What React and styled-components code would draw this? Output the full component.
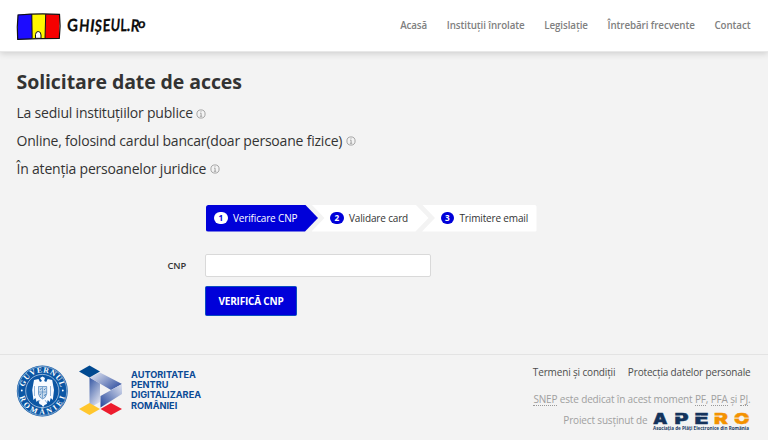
import React from 'react';
import styled, { createGlobalStyle, css } from 'styled-components';

const GlobalStyle = createGlobalStyle`
  * { box-sizing: border-box; }
  body {
    margin: 0;
    background: #f3f3f3;
    color: #333;
    font-family: "Open Sans", sans-serif;
    font-size: 10px;
    letter-spacing: -0.155px;
    line-height: 14px;
  }
`;

const Page = styled.div`
  display: flex;
  flex-direction: column;
  height: 440px;
  overflow: hidden;
`;

const Header = styled.header`
  display: flex;
  flex: none;
  align-items: center;
  justify-content: space-between;
  height: 52px;
  padding: 0 17.5px 0 16px;
  background: #fff;
  border-bottom: 1px solid #e8e8e8;
  box-shadow: 0 1px 7px rgba(0, 0, 0, 0.18);
`;

const Brand = styled.a`
  display: flex;
`;

const Nav = styled.nav`
  display: flex;
  gap: 19.7px;
`;

const NavLink = styled.a`
  color: #808080;
  font-size: 9.8px;
  font-weight: 600;
  letter-spacing: -0.1px;
  white-space: nowrap;
`;

const Main = styled.main`
  flex: none;
  height: 302px;
  padding: 16px 16.5px 0;
`;

const Title = styled.h1`
  margin: 0 0 7px;
  font-size: 19.5px;
  font-weight: 700;
  letter-spacing: -0.09px;
  line-height: 28px;
`;

const Topic = styled.h2`
  display: flex;
  align-items: center;
  gap: 3.5px;
  height: 20px;
  margin: 0 0 7.75px;
  font-size: 14px;
  font-weight: 400;
  letter-spacing: -0.205px;
  line-height: 20px;
  white-space: nowrap;
`;

const InfoSvg = styled.svg`
  margin-top: 1px;
`;

const Steps = styled.ol`
  display: flex;
  width: 330.5px;
  height: 27px;
  margin: 26px 0 0 189.5px;
  padding: 0;
  border-radius: 2.5px;
  overflow: hidden;
  list-style: none;
`;

const arrowShapes = {
  first: 'polygon(0 0, calc(100% - 13px) 0, 100% 50%, calc(100% - 13px) 100%, 0 100%)',
  middle: 'polygon(0 0, calc(100% - 13px) 0, 100% 50%, calc(100% - 13px) 100%, 0 100%, 13px 50%)',
  last: 'polygon(0 0, 100% 0, 100% 100%, 0 100%, 13px 50%)',
};

const Step = styled.li`
  display: flex;
  flex: none;
  align-items: center;
  gap: 5.5px;
  width: ${(p) => p.$width}px;
  padding-left: 18.5px;
  margin-left: -6.5px;
  background: #fff;
  clip-path: ${(p) => arrowShapes[p.$shape]};
  white-space: nowrap;
  ${(p) => p.$active && css`
    margin-left: 0;
    padding-left: 8px;
    background: #0000d9;
    color: #fff;
  `}
`;

const StepNumber = styled.span`
  width: 13.5px;
  height: 12px;
  border-radius: 6px;
  background: ${(p) => (p.$active ? '#fff' : '#0000d9')};
  color: ${(p) => (p.$active ? '#0000d9' : '#fff')};
  font-size: 8.2px;
  font-weight: 700;
  letter-spacing: 0;
  line-height: 12px;
  text-align: center;
`;

const Form = styled.form`
  display: grid;
  grid-template-columns: 169.5px 226px;
  column-gap: 19px;
  row-gap: 9px;
  align-items: center;
  margin-top: 22.5px;
`;

const Label = styled.label`
  font-size: 9.3px;
  font-weight: 600;
  text-align: right;
`;

const Input = styled.input`
  width: 226px;
  height: 23px;
  padding: 0 6px;
  border: 1px solid #d9d9d9;
  border-radius: 2px;
  background: #fff;
`;

const Submit = styled.button`
  grid-column: 2;
  justify-self: start;
  width: 92px;
  height: 30px;
  padding: 0;
  border: 1px solid #0a4fc0;
  border-radius: 1.5px;
  background: #0000d9;
  color: #fff;
  font-family: inherit;
  font-size: 10px;
  font-weight: 700;
  letter-spacing: -0.2px;
`;

const Footer = styled.footer`
  display: flex;
  flex: 1;
  justify-content: space-between;
  padding: 10px 17.5px 0 16px;
  border-top: 1px solid #e3e3e3;
`;

const Partners = styled.div`
  display: flex;
  align-items: flex-start;
  gap: 10px;
`;

const Authority = styled.p`
  margin: 5px 0 0 -1px;
  color: #0a4a96;
  font-family: Inter, sans-serif;
  font-size: 9.2px;
  font-weight: 700;
  letter-spacing: 0;
  line-height: 10.2px;
`;

const FooterInfo = styled.div`
  display: flex;
  flex-direction: column;
  align-items: flex-end;
  color: #a0a0a0;
`;

const LegalLinks = styled.div`
  display: flex;
  gap: 12.5px;
  color: #4d4d4d;
`;

const Dedication = styled.p`
  margin: 13px 0 0;
`;

const Abbr = styled.abbr`
  display: inline-block;
  height: 14px;
  border-bottom: 1px dotted #999;
  text-decoration: none;
`;

const Support = styled.div`
  display: flex;
  align-items: flex-start;
  gap: 5px;
  margin-top: 5px;
  line-height: 19px;
`;

const LogoSvg = styled.svg`
  display: block;
  overflow: visible;
  letter-spacing: 0;
`;

const InfoIcon = () => (
  <InfoSvg width="10" height="10" viewBox="0 0 10 10" fill="none" stroke="#8b8b8b" strokeWidth="0.75">
    <circle cx="5" cy="5" r="4.1" />
    <path d="M4.100 4.200h1v3M3.900 7.300h2.300M5 2.300v.9" />
  </InfoSvg>
);

// Character, x, baseline, tilt, font size, horizontal stretch
const WORDMARK = [
  ['G', 0, 19.600, -3, 17, 0.88],
  ['H', 11.800, 19.500, 1, 17, 0.78],
  ['I', 22.500, 19.600, 3, 17, 0.9],
  ['Ș', 27.300, 19.400, 2, 16.500, 0.78],
  ['E', 35.500, 19.400, -2, 17, 0.78],
  ['U', 43.200, 19, 1, 17, 0.74],
  ['L', 53.200, 19.200, -2, 17, 0.72],
  ['.', 59.600, 19.200, 0, 17, 0.9],
  ['R', 63.300, 19.600, 2, 17, 0.8],
  ['o', 70.800, 16.200, 0, 13, 1],
];

const GhiseulLogo = () => (
  <LogoSvg width="132" height="30" viewBox="0 0 132 30">
    <path d="M2 3.500L16 3v25L1.500 28.500z" fill="#1c0cff" />
    <path d="M16 3h13.500l-.3 24.500L16 28z" fill="#fff700" />
    <path d="M29.500 3L44 3.500 43 27.500H29z" fill="#f50000" />
    <path d="M2 4Q22 2 43.500 3.300Q44.800 15 43.300 27.300Q22 27.300 1.700 28.300Q.8 15 2 4z" fill="none" stroke="#111" strokeWidth="1.2" />
    <path d="M15.800 3.200L16.200 27.500M29.700 3.200L29 27.500" stroke="#111" strokeWidth="1" />
    <path d="M19.500 27.300V23.500Q20 20.300 22.200 20.500Q25 20.500 25 24V27.300z" fill="#fff" stroke="#111" />
    <g transform="translate(51 1)" fill="#0b0b0b" stroke="#0b0b0b" strokeWidth=".25" fontFamily="Lato, sans-serif" fontWeight="700">
      {WORDMARK.map(([ch, x, y, angle, size, stretch]) => (
        <text key={ch} fontSize={size} transform={`translate(${x} ${y}) rotate(${angle}) skewX(-4) scale(${stretch} 1)`}>{ch}</text>
      ))}
    </g>
  </LogoSvg>
);

const GovernmentSeal = () => (
  <LogoSvg width="53" height="52" viewBox="0 0 53 52">
    <defs>
      <path id="sealTop" d="M7.800 26a18.500 18.500 0 0 1 37 0" />
      <path id="sealBottom" d="M2.900 26a23.400 23.400 0 0 0 46.800 0" />
    </defs>
    <circle cx="26.300" cy="26" r="25.500" fill="#0b56a4" />
    <circle cx="26.300" cy="26" r="24.500" fill="none" stroke="#e6eff8" strokeWidth=".5" />
    <circle cx="26.300" cy="26" r="16.600" fill="none" stroke="#e6eff8" strokeWidth=".6" />
    <g fill="#fff" fontFamily="Liberation Serif, serif" fontSize="7.800" fontWeight="700">
      <text><textPath href="#sealTop" startOffset="4" textLength="50">GUVERNUL</textPath></text>
      <text><textPath href="#sealBottom" startOffset="6" textLength="61">ROMÂNIEI</textPath></text>
    </g>
    <circle cx="5.800" cy="25.500" r=".9" fill="#fff" />
    <circle cx="46.800" cy="25.500" r=".9" fill="#fff" />
    <path d="M24 13l2.500-1.500 2.500 1.500-.8 3 2 1 1.500-3 4.500 1 1.800 10-1.200 10-2-2-1.200 4-1.800-2-1 4-2.200 1-1.500 2-1.500-2-2.200-1-1-4-1.800 2-1.200-4-2 2-1.200-10 1.800-10 4.500-1 1.500 3 2-1z" fill="#f7faff" />
    <path d="M22.500 21.500h8.200v7.500q-1 4-4 5-3.200-1-4.200-5z" fill="#c7d9eb" stroke="#0b56a4" strokeWidth=".5" />
    <path d="M26.500 22v11.500M22.500 27h8M18.500 21v10M34.500 21v10M24 35l-2 3M29 35l2 3" stroke="#3474b6" strokeWidth=".5" fill="none" />
    <path d="M24 24.500l1.500-1M28 25l1.500-1.500M24 30l1-1.500M28.500 31l1-2" stroke="#0b56a4" strokeWidth=".7" />
  </LogoSvg>
);

const AuthorityLogo = () => (
  <LogoSvg width="43" height="51" viewBox="0 0 43 51">
    <defs>
      <linearGradient id="stem" x1="0" y1="0" x2=".5" y2="1">
        <stop offset="0" stopColor="#3456a3" /><stop offset="1" stopColor="#d5daeb" />
      </linearGradient>
      <linearGradient id="roof" x1="0" y1="0" x2="1" y2=".7">
        <stop offset="0" stopColor="#eceef6" /><stop offset="1" stopColor="#3b58a5" />
      </linearGradient>
      <linearGradient id="fold" x1="1" y1="0" x2="0" y2="1">
        <stop offset="0" stopColor="#dfe3f1" /><stop offset="1" stopColor="#24479b" />
      </linearGradient>
    </defs>
    <path d="M10.500 12.500L21 18.500v18.500L10.500 43z" fill="url(#stem)" />
    <path d="M10.500 12.500L21 7.500l22 11.500-11 6z" fill="url(#roof)" />
    <path d="M43 19v10L21.500 42.500V31z" fill="url(#fold)" />
    <path d="M0 6.500L10.500.5 21 6.500 10.500 12.500z" fill="#004990" />
    <path d="M0 44l10.500-6L21 44l-10.500 6z" fill="#ffc62c" />
    <path d="M21.500 44L32 38l11 6-11 6z" fill="#ed1c2d" />
  </LogoSvg>
);

const NAVY = '#14335c';
const ORANGE = '#f39200';

const APERO = [
  ['A', 0, NAVY, 14.500],
  ['P', 21.500, NAVY, 14],
  ['E', 41.500, NAVY, 14],
  ['R', 61, ORANGE, 14],
  ['O', 81, ORANGE, 15.500],
];

const AperoLogo = () => (
  <LogoSvg width="98" height="22" viewBox="0 0 98 22">
    <g fontFamily="Inter, sans-serif" fontWeight="900" fontSize="15">
      {APERO.map(([ch, x, color, width]) => (
        <text key={ch} x={x} y="12.500" fill={color} stroke={color} strokeWidth=".4" textLength={width} lengthAdjust="spacingAndGlyphs">{ch}</text>
      ))}
    </g>
    <path d="M21 5.100h9M41 5.100h7M60.500 5.100h9M80.500 7.100h17" stroke="#f3f3f3" strokeWidth="1" />
    <text x="0" y="18.800" fill="#1d3c66" fontFamily="Open Sans, sans-serif" fontSize="5" fontWeight="700" textLength="96" lengthAdjust="spacingAndGlyphs">
      Asociația de Plăți Electronice din România
    </text>
  </LogoSvg>
);

const NAV = ['Acasă', 'Instituții înrolate', 'Legislație', 'Întrebări frecvente', 'Contact'];

const TOPICS = [
  'La sediul instituțiilor publice',
  'Online, folosind cardul bancar(doar persoane fizice)',
  'În atenția persoanelor juridice',
];

const STEPS = [
  { label: 'Verificare CNP', width: 112, shape: 'first', active: true },
  { label: 'Validare card', width: 117, shape: 'middle' },
  { label: 'Trimitere email', width: 114.5, shape: 'last' },
];

export default function App() {
  return (
    <Page>
      <GlobalStyle />
      <Header>
        <Brand><GhiseulLogo /></Brand>
        <Nav>{NAV.map((item) => <NavLink key={item}>{item}</NavLink>)}</Nav>
      </Header>
      <Main>
        <Title>Solicitare date de acces</Title>
        {TOPICS.map((topic) => <Topic key={topic}>{topic}<InfoIcon /></Topic>)}
        <Steps>
          {STEPS.map((step, i) => (
            <Step key={step.label} $width={step.width} $shape={step.shape} $active={step.active}>
              <StepNumber $active={step.active}>{i + 1}</StepNumber>
              {step.label}
            </Step>
          ))}
        </Steps>
        <Form>
          <Label htmlFor="cnp">CNP</Label>
          <Input id="cnp" />
          <Submit type="button">VERIFICĂ CNP</Submit>
        </Form>
      </Main>
      <Footer>
        <Partners>
          <GovernmentSeal />
          <AuthorityLogo />
          <Authority>AUTORITATEA<br />PENTRU<br />DIGITALIZAREA<br />ROMÂNIEI</Authority>
        </Partners>
        <FooterInfo>
          <LegalLinks>
            <span>Termeni și condiții</span>
            <span>Protecția datelor personale</span>
          </LegalLinks>
          <Dedication>
            <Abbr>SNEP</Abbr> este dedicat în acest moment <Abbr>PF</Abbr>, <Abbr>PFA</Abbr> și <Abbr>PJ</Abbr>.
          </Dedication>
          <Support>
            <span>Proiect susținut de</span>
            <AperoLogo />
          </Support>
        </FooterInfo>
      </Footer>
    </Page>
  );
}
